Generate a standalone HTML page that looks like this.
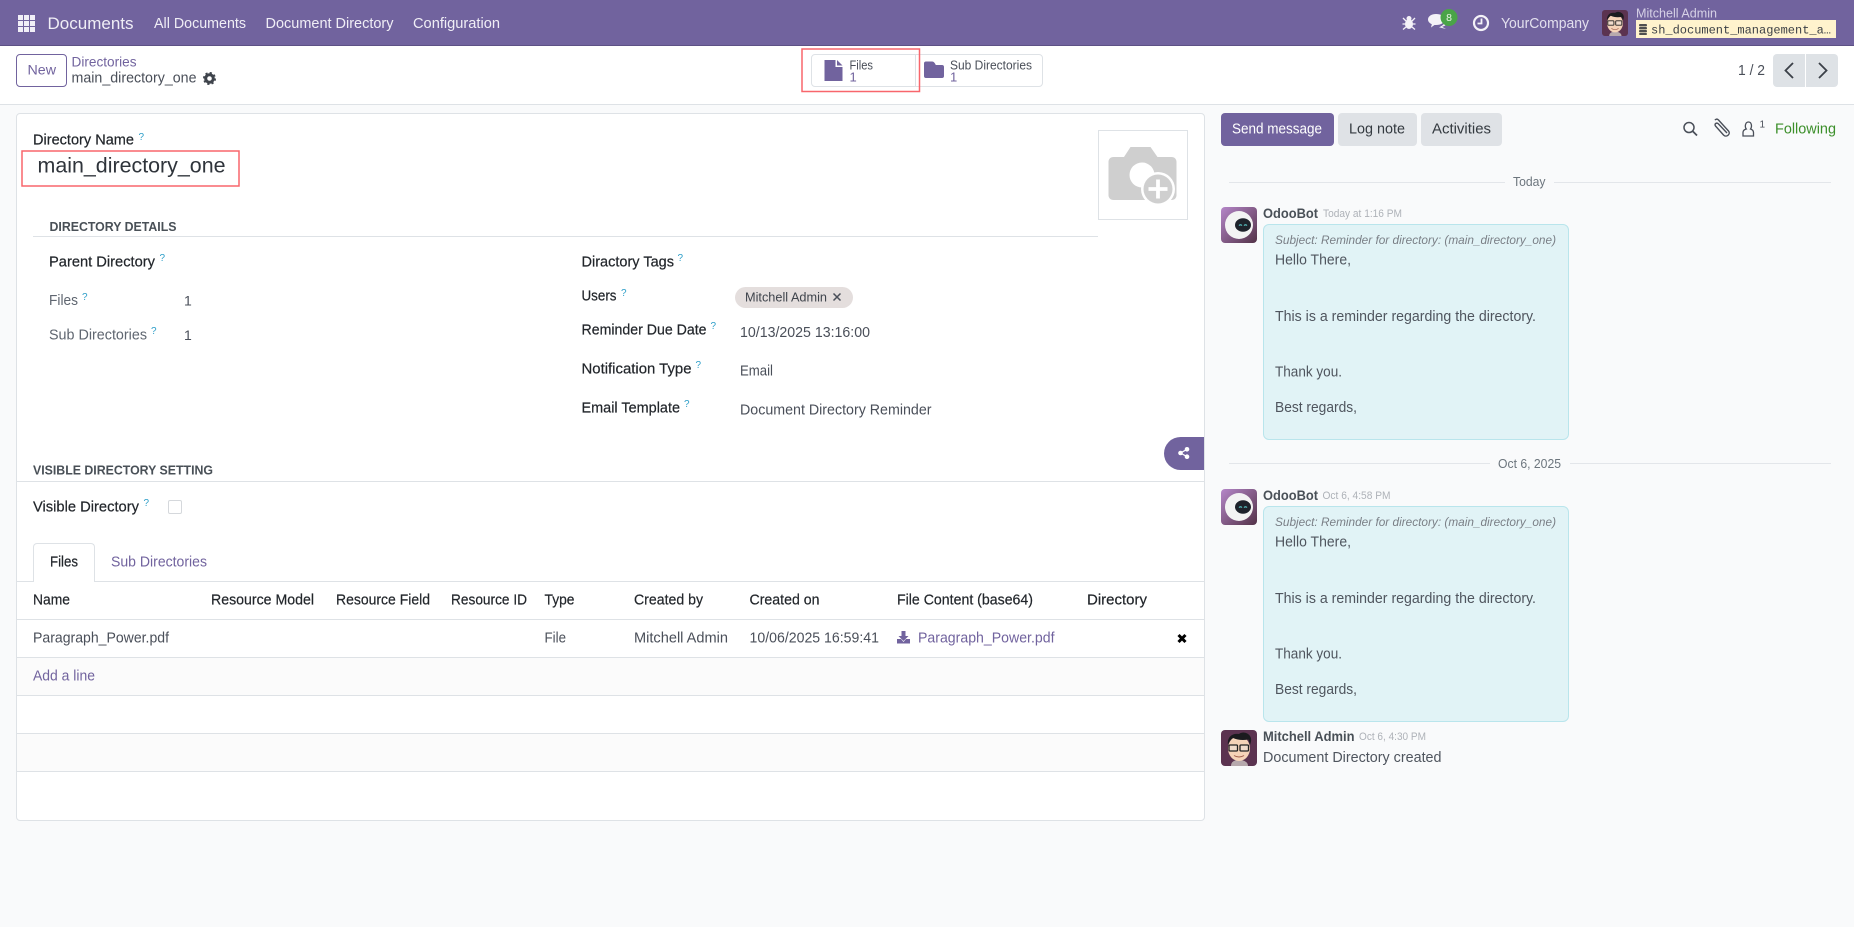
<!DOCTYPE html>
<html lang="en"><head><meta charset="utf-8"><title>Documents</title>
<style>
html,body{margin:0;padding:0;width:1854px;height:927px;overflow:hidden;background:#f9fafb}
body{position:relative;font-family:"Liberation Sans",sans-serif}
.b{position:absolute;box-sizing:border-box}
svg{position:absolute;left:0;top:0}
text{font-family:"Liberation Sans",sans-serif;font-size:14.5px;fill:#4a4f59}
.lb{fill:#22262b;stroke:#22262b;stroke-width:.2px}
.th{fill:#22262b;stroke:#22262b;stroke-width:.2px}
.mu{fill:#5f6670}
.pr{fill:#71639e}
.nv{fill:#f0eef6}
.q{font-size:10px;fill:#2f9fc9}
.sec{font-size:13px;font-weight:bold;fill:#495057}
.dt{font-size:11px;fill:#aeb2b8}
.au{font-size:13.5px;font-weight:bold;fill:#495057}
.ms{font-size:14.5px;fill:#4f555e}
</style></head><body>
<div class="b" style="left:0;top:0;width:1854px;height:46px;background:#71639e;border-bottom:1px solid #5d5185"></div>
<div class="b" style="left:0;top:46px;width:1854px;height:59px;background:#fff;border-bottom:1px solid #dee2e6"></div>
<div class="b" style="left:16px;top:54px;width:51px;height:33px;border:1px solid #71639e;border-radius:4px;background:#fff"></div>
<div class="b" style="left:811px;top:54px;width:232px;height:33px;border:1px solid #dee2e6;border-radius:4px;background:#fff"></div>
<div class="b" style="left:915px;top:54px;width:1px;height:33px;background:#dee2e6"></div>
<div class="b" style="left:1773px;top:54px;width:32px;height:33px;background:#dee2e6;border-radius:4px 0 0 4px"></div>
<div class="b" style="left:1806px;top:54px;width:32px;height:33px;background:#dee2e6;border-radius:0 4px 4px 0"></div>
<div class="b" style="left:16px;top:113px;width:1189px;height:708px;background:#fff;border:1px solid #dee2e6;border-radius:4px"></div>
<div class="b" style="left:33px;top:236px;width:1065px;height:1px;background:#dee2e6"></div>
<div class="b" style="left:1098px;top:130px;width:90px;height:90px;border:1px solid #dee2e6;background:#fff"></div>
<div class="b" style="left:17px;top:481px;width:1187px;height:1px;background:#dee2e6"></div>
<div class="b" style="left:168px;top:500px;width:14px;height:14px;border:1px solid #d5d8dc;border-radius:2px;background:#fff"></div>
<div class="b" style="left:1164px;top:437px;width:40px;height:33px;background:#71639e;border-radius:17px 0 0 17px"></div>
<div class="b" style="left:735px;top:287px;width:118px;height:21px;background:#e4dedd;border-radius:11px"></div>
<div class="b" style="left:17px;top:581px;width:1187px;height:1px;background:#dee2e6"></div>
<div class="b" style="left:33px;top:543px;width:62px;height:39px;background:#fff;border:1px solid #dee2e6;border-bottom:0;border-radius:4px 4px 0 0"></div>
<div class="b" style="left:17px;top:619px;width:1187px;height:1px;background:#dee2e6"></div>
<div class="b" style="left:17px;top:657px;width:1187px;height:39px;background:#fbfbfb;border-top:1px solid #dee2e6;border-bottom:1px solid #dee2e6"></div>
<div class="b" style="left:17px;top:733px;width:1187px;height:39px;background:#fbfbfb;border-top:1px solid #dee2e6;border-bottom:1px solid #dee2e6"></div>
<div class="b" style="left:1221px;top:113px;width:113px;height:33px;background:#71639e;border-radius:4px"></div>
<div class="b" style="left:1338px;top:113px;width:79px;height:33px;background:#dfe2e6;border-radius:4px"></div>
<div class="b" style="left:1421px;top:113px;width:81px;height:33px;background:#dfe2e6;border-radius:4px"></div>
<div class="b" style="left:1229px;top:182px;width:276px;height:1px;background:#e3e6ea"></div>
<div class="b" style="left:1554px;top:182px;width:277px;height:1px;background:#e3e6ea"></div>
<div class="b" style="left:1229px;top:463px;width:261px;height:1px;background:#e3e6ea"></div>
<div class="b" style="left:1570px;top:463px;width:261px;height:1px;background:#e3e6ea"></div>
<div class="b" style="left:1263px;top:224px;width:306px;height:216px;background:#e1f3f6;border:1px solid #b9e5ec;border-radius:6px"></div>
<div class="b" style="left:1263px;top:506px;width:306px;height:216px;background:#e1f3f6;border:1px solid #b9e5ec;border-radius:6px"></div>
<div class="b" style="left:1636px;top:20px;width:200px;height:18px;background:#fff3cd"></div>

<svg width="1854" height="927" viewBox="0 0 1854 927" xmlns="http://www.w3.org/2000/svg">
<!-- highlight boxes -->
<rect x="802" y="49" width="117.500" height="42.500" fill="none" stroke="#f8666c" stroke-width="1.500"/>
<rect x="22" y="151" width="217" height="35" fill="none" stroke="#f8666c" stroke-width="1.500"/>
<!-- apps grid -->
<g fill="#f1eff7">
<rect x="18" y="15" width="5" height="5"/><rect x="24" y="15" width="5" height="5"/><rect x="30" y="15" width="5" height="5"/>
<rect x="18" y="21" width="5" height="5"/><rect x="24" y="21" width="5" height="5"/><rect x="30" y="21" width="5" height="5"/>
<rect x="18" y="27" width="5" height="5"/><rect x="24" y="27" width="5" height="5"/><rect x="30" y="27" width="5" height="5"/>
</g>
<text class="nv" x="47.500" y="29" style="font-size:17px" textLength="86" lengthAdjust="spacingAndGlyphs">Documents</text>
<text class="nv" x="154" y="28" textLength="92" lengthAdjust="spacingAndGlyphs">All Documents</text>
<text class="nv" x="265.500" y="28" textLength="128" lengthAdjust="spacingAndGlyphs">Document Directory</text>
<text class="nv" x="413" y="28" textLength="87" lengthAdjust="spacingAndGlyphs">Configuration</text>

<!-- bug -->
<g fill="#f4f2f8" stroke="#f4f2f8">
<ellipse cx="1409" cy="24" rx="4" ry="5" stroke="none"/><circle cx="1409" cy="18.500" r="2.500" stroke="none"/>
<path d="M1403 18l3 3M1415 18l-3 3M1402.500 24h3M1415.500 24h-3M1403 29.500l3-2.500M1415 29.500l-3-2.500" fill="none" stroke-width="1.300"/>
</g>
<!-- comments -->
<path d="M1436 14c5 0 8.500 2.300 8.500 5.500s-3.500 5.500-8.500 5.500h-1.500l-3.500 2.500.8-3.300c-2.300-1-3.800-2.700-3.800-4.700 0-3.200 3.500-5.500 8-5.500z" fill="#f4f2f8"/>
<path d="M1445 22l2 .5c-.5 2.500-3 4-5 4.200l4 2.300-7-1.800c2-.5 5-2.500 6-5.200z" fill="#f4f2f8"/>
<circle cx="1449" cy="17.500" r="8.500" fill="#4aa448"/>
<text x="1449" y="21" text-anchor="middle" style="font-size:10.500px;fill:#e9f6e6">8</text>
<!-- clock -->
<circle cx="1481" cy="23" r="7" fill="none" stroke="#f4f2f8" stroke-width="2.200"/>
<path d="M1481.500 18.500v5h-4" fill="none" stroke="#f4f2f8" stroke-width="1.800"/>
<text class="nv" x="1501" y="28" textLength="88" lengthAdjust="spacingAndGlyphs" style="fill:#e3e0ee">YourCompany</text>
<!-- nav avatar -->
<g transform="translate(1602 10) scale(.722)">
<rect width="36" height="36" rx="4" fill="#5b3350"/>
<path d="M10 36c0-4 3-6 8-6s9 2 9 6z" fill="#b7a9ad"/>
<ellipse cx="18" cy="18.500" rx="11" ry="12.500" fill="#f5d3b8"/>
<path d="M7 15C6 7 11 3 18 4c4-3 9-1 11 2 2 3 1 6 0 9l-1.500-5.500c-6 1-11 .5-15.500-1.500-1.500 1-3.500 3-5 7z" fill="#1b1b1f"/>
<g fill="#e9e9e9" fill-opacity=".4" stroke="#222" stroke-width="1.300"><rect x="8" y="15" width="8.500" height="6" rx="1"/><rect x="19" y="15" width="8.500" height="6" rx="1"/></g>
<path d="M13 25.500c3 2 7 2 10 0" fill="none" stroke="#a2604c" stroke-width="1"/>
</g>
<text x="1636" y="17.500" textLength="81" lengthAdjust="spacingAndGlyphs" style="font-size:13px;fill:#d6d1e6">Mitchell Admin</text>
<g fill="#4f4f4f"><rect x="1639" y="24" width="8" height="2.400" rx="1"/><rect x="1639" y="27" width="8" height="2.400" rx="1"/><rect x="1639" y="30" width="8" height="2.400" rx="1"/><rect x="1639" y="33" width="8" height="2" rx="1"/></g>
<text x="1651" y="33.300" textLength="180" lengthAdjust="spacing" style="font-family:'Liberation Mono',monospace;font-size:12px;fill:#3b3f44">sh_document_management_a…</text>

<!-- control panel -->
<text class="pr" x="27.500" y="74.500" textLength="28.500" lengthAdjust="spacingAndGlyphs" style="font-size:14px">New</text>
<text class="pr" x="71.500" y="66.500" textLength="65" lengthAdjust="spacingAndGlyphs" style="font-size:13.500px">Directories</text>
<text x="71.500" y="82.500" textLength="125" lengthAdjust="spacingAndGlyphs" style="font-size:14.500px">main_directory_one</text>
<g><circle cx="209.500" cy="78.500" r="3.800" fill="none" stroke="#3f444c" stroke-width="3"/>
<circle cx="209.500" cy="78.500" r="5.600" fill="none" stroke="#3f444c" stroke-width="1.800" stroke-dasharray="2.200 2.200"/></g>
<!-- file icon -->
<path d="M824.500 60h11v7h7v14h-18z" fill="#71639e"/><path d="M837 60l5.500 5.500H837z" fill="#71639e"/>
<text x="849.500" y="69.500" textLength="23.500" lengthAdjust="spacingAndGlyphs" style="font-size:12.500px">Files</text>
<text class="pr" x="849.500" y="81.500" style="font-size:13px">1</text>
<path d="M926 61.500h6c1.500 0 2 .6 3 2l.8 1.500h6.200c1.300 0 2 .8 2 2v9c0 1.200-.7 2-2 2h-16c-1.300 0-2-.8-2-2V63.500c0-1.200.7-2 2-2z" fill="#71639e"/>
<text x="950" y="69.500" textLength="82" lengthAdjust="spacingAndGlyphs" style="font-size:12.500px">Sub Directories</text>
<text class="pr" x="950" y="81.500" style="font-size:13px">1</text>
<!-- pager -->
<text x="1738" y="75" textLength="27" lengthAdjust="spacingAndGlyphs">1 / 2</text>
<path d="M1793 63l-7.500 7.500 7.500 7.500" fill="none" stroke="#3b4048" stroke-width="1.800"/>
<path d="M1819 63l7.500 7.500-7.500 7.500" fill="none" stroke="#3b4048" stroke-width="1.800"/>

<!-- form -->
<text class="lb" x="33" y="144.500" textLength="101" lengthAdjust="spacingAndGlyphs">Directory Name</text>
<text class="q" x="138.500" y="140">?</text>
<text x="37.500" y="172.500" textLength="188" lengthAdjust="spacingAndGlyphs" style="font-size:21px;fill:#2f343b">main_directory_one</text>
<text class="sec" x="49.500" y="231" textLength="127" lengthAdjust="spacingAndGlyphs">DIRECTORY DETAILS</text>
<!-- camera placeholder -->
<path d="M1113 157h11l6.500-10h20l7 10h14c3 0 5 2 5 5v33c0 3-2 5-5 5h-58c-3 0-5-2-5-5v-33c0-3 2-5 5-5z" fill="#cfcfcf"/>
<circle cx="1142" cy="175" r="12.500" fill="#fff"/>
<circle cx="1158" cy="189" r="17" fill="#fff"/>
<circle cx="1158" cy="189" r="14.500" fill="#cfcfcf"/>
<path d="M1158 179.500v19M1148.500 189h19" stroke="#fff" stroke-width="3.800"/>

<text class="lb" x="49" y="266.500" textLength="106" lengthAdjust="spacingAndGlyphs">Parent Directory</text>
<text class="q" x="159.500" y="261">?</text>
<text class="mu" x="49" y="305" textLength="29" lengthAdjust="spacingAndGlyphs">Files</text>
<text class="q" x="82" y="300">?</text>
<text x="184" y="305.500" style="font-size:14px">1</text>
<text class="mu" x="49" y="339.500" textLength="98" lengthAdjust="spacingAndGlyphs">Sub Directories</text>
<text class="q" x="151" y="334">?</text>
<text x="184" y="340" style="font-size:14px">1</text>

<text class="lb" x="581.500" y="266.500" textLength="92.500" lengthAdjust="spacingAndGlyphs">Diractory Tags</text>
<text class="q" x="677.500" y="261">?</text>
<text class="lb" x="581.500" y="300.500" textLength="35" lengthAdjust="spacingAndGlyphs">Users</text>
<text class="q" x="621" y="296">?</text>
<text class="lb" x="581.500" y="334.500" textLength="125" lengthAdjust="spacingAndGlyphs">Reminder Due Date</text>
<text class="q" x="710.500" y="329">?</text>
<text class="lb" x="581.500" y="373.500" textLength="110" lengthAdjust="spacingAndGlyphs">Notification Type</text>
<text class="q" x="695.500" y="368">?</text>
<text class="lb" x="581.500" y="412.500" textLength="98.500" lengthAdjust="spacingAndGlyphs">Email Template</text>
<text class="q" x="684" y="407">?</text>
<text x="745" y="301.500" textLength="82" lengthAdjust="spacingAndGlyphs" style="font-size:12.500px;fill:#3f444c">Mitchell Admin</text>
<path d="M833.500 293.500l7 7M840.500 293.500l-7 7" stroke="#4a4f59" stroke-width="1.500"/>
<text x="740" y="337" textLength="130" lengthAdjust="spacingAndGlyphs">10/13/2025 13:16:00</text>
<text x="740" y="375.500" textLength="33" lengthAdjust="spacingAndGlyphs">Email</text>
<text x="740" y="414.500" textLength="191.500" lengthAdjust="spacingAndGlyphs">Document Directory Reminder</text>

<text class="sec" x="33" y="474.500" textLength="180" lengthAdjust="spacingAndGlyphs">VISIBLE DIRECTORY SETTING</text>
<text class="lb" x="33" y="511.500" textLength="106" lengthAdjust="spacingAndGlyphs">Visible Directory</text>
<text class="q" x="143.500" y="506">?</text>
<!-- share -->
<g fill="#fff"><circle cx="1180.500" cy="453" r="2.300"/><circle cx="1187" cy="449.300" r="2.300"/><circle cx="1187" cy="456.700" r="2.300"/></g>
<path d="M1180.500 453l6.500-3.700M1180.500 453l6.500 3.700" stroke="#fff" stroke-width="1.200"/>

<!-- tabs/table -->
<text class="lb" x="50" y="566.500" textLength="28" lengthAdjust="spacingAndGlyphs">Files</text>
<text class="pr" x="111" y="566.500" textLength="96" lengthAdjust="spacingAndGlyphs">Sub Directories</text>
<g>
<text class="th" x="33" y="604.500" textLength="37" lengthAdjust="spacingAndGlyphs">Name</text>
<text class="th" x="211" y="604.500" textLength="103" lengthAdjust="spacingAndGlyphs">Resource Model</text>
<text class="th" x="336" y="604.500" textLength="94" lengthAdjust="spacingAndGlyphs">Resource Field</text>
<text class="th" x="451" y="604.500" textLength="76" lengthAdjust="spacingAndGlyphs">Resource ID</text>
<text class="th" x="544.500" y="604.500" textLength="30" lengthAdjust="spacingAndGlyphs">Type</text>
<text class="th" x="634" y="604.500" textLength="69" lengthAdjust="spacingAndGlyphs">Created by</text>
<text class="th" x="749.500" y="604.500" textLength="70" lengthAdjust="spacingAndGlyphs">Created on</text>
<text class="th" x="897" y="604.500" textLength="136" lengthAdjust="spacingAndGlyphs">File Content (base64)</text>
<text class="th" x="1087" y="604.500" textLength="60" lengthAdjust="spacingAndGlyphs">Directory</text>
</g>
<text x="33" y="642.500" textLength="136" lengthAdjust="spacingAndGlyphs">Paragraph_Power.pdf</text>
<text x="544.500" y="642.500" textLength="21.500" lengthAdjust="spacingAndGlyphs">File</text>
<text x="634" y="642.500" textLength="94" lengthAdjust="spacingAndGlyphs">Mitchell Admin</text>
<text x="749.500" y="642.500" textLength="129.500" lengthAdjust="spacingAndGlyphs">10/06/2025 16:59:41</text>
<path d="M901.500 631h4v5h3l-5 5-5-5h3z" fill="#71639e"/><path d="M897 639h4l2.500 3 2.500-3h4v4.500h-13z" fill="#71639e"/>
<text class="pr" x="918" y="642.500" textLength="136.500" lengthAdjust="spacingAndGlyphs">Paragraph_Power.pdf</text>
<path d="M1178.500 635l7 7M1185.500 635l-7 7" stroke="#000" stroke-width="3"/>
<text class="pr" x="33" y="680.500" textLength="62" lengthAdjust="spacingAndGlyphs">Add a line</text>

<!-- chatter -->
<text x="1232" y="133.500" textLength="90" lengthAdjust="spacingAndGlyphs" style="fill:#fff">Send message</text>
<text x="1349" y="133.500" textLength="56" lengthAdjust="spacingAndGlyphs" style="fill:#343a40">Log note</text>
<text x="1432" y="133.500" textLength="59" lengthAdjust="spacingAndGlyphs" style="fill:#343a40">Activities</text>
<circle cx="1689" cy="127.500" r="5" fill="none" stroke="#4a4f59" stroke-width="1.500"/><path d="M1692.500 131l4.500 4.500" stroke="#4a4f59" stroke-width="1.800"/>
<path d="M1728 134l-8.500-9c-2-2-4.500 0-3 2l8 9c3 3 7.500-1 5-4l-10-11c-1.500-1.500-3-.8-3.500.2" fill="none" stroke="#4a4f59" stroke-width="1.400" transform="translate(-1 -1)"/>
<path d="M1743 135h10.500v-3.500c0-2-1.500-3-3-3.500 1.500-2 1.500-7-2-7-3.500 0-3.800 5-2.200 7-1.800.5-3.300 1.500-3.300 3.500z" fill="none" stroke="#4a4f59" stroke-width="1.300" transform="translate(0 1)"/>
<text x="1759.500" y="127.500" style="font-size:10px">1</text>
<text x="1775" y="133.500" textLength="61" lengthAdjust="spacingAndGlyphs" style="fill:#3c8f2a">Following</text>

<text x="1513" y="186" textLength="32.500" lengthAdjust="spacingAndGlyphs" style="font-size:12.500px;fill:#6c757d">Today</text>
<text x="1498" y="468" textLength="63" lengthAdjust="spacingAndGlyphs" style="font-size:12.500px;fill:#6c757d">Oct 6, 2025</text>

<!-- Message 1 -->
<defs><linearGradient id="bg" x1="0" y1="0" x2="1" y2="1"><stop offset="0" stop-color="#b586c9"/><stop offset="1" stop-color="#533248"/></linearGradient></defs>
<g transform="translate(1221 207)">
<rect width="36" height="36" rx="4" fill="url(#bg)"/><circle cx="18" cy="18" r="14" fill="#f3f3f3"/><ellipse cx="22" cy="18" rx="8" ry="6.800" fill="#1e222b"/>
<path d="M18 18.500a2 2 0 0 1 3 0M23 18.500a2 2 0 0 1 3 0" stroke="#5fd3d3" stroke-width="1.100" fill="none"/></g>
<text class="au" x="1263" y="218" textLength="55" lengthAdjust="spacingAndGlyphs">OdooBot</text>
<text class="dt" x="1323" y="217" textLength="79" lengthAdjust="spacingAndGlyphs">Today at 1:16 PM</text>
<text x="1275" y="244" textLength="281" lengthAdjust="spacingAndGlyphs" style="font-size:12px;font-style:italic;fill:#7a7f86">Subject: Reminder for directory: (main_directory_one)</text>
<text class="ms" x="1275" y="264.500" textLength="76" lengthAdjust="spacingAndGlyphs">Hello There,</text>
<text class="ms" x="1275" y="321" textLength="261" lengthAdjust="spacingAndGlyphs">This is a reminder regarding the directory.</text>
<text class="ms" x="1275" y="376.500" textLength="67" lengthAdjust="spacingAndGlyphs">Thank you.</text>
<text class="ms" x="1275" y="412" textLength="82" lengthAdjust="spacingAndGlyphs">Best regards,</text>

<!-- Message 2 -->
<g transform="translate(1221 489)">
<rect width="36" height="36" rx="4" fill="url(#bg)"/><circle cx="18" cy="18" r="14" fill="#f3f3f3"/><ellipse cx="22" cy="18" rx="8" ry="6.800" fill="#1e222b"/>
<path d="M18 18.500a2 2 0 0 1 3 0M23 18.500a2 2 0 0 1 3 0" stroke="#5fd3d3" stroke-width="1.100" fill="none"/></g>
<text class="au" x="1263" y="500" textLength="55" lengthAdjust="spacingAndGlyphs">OdooBot</text>
<text class="dt" x="1322.500" y="499" textLength="68" lengthAdjust="spacingAndGlyphs">Oct 6, 4:58 PM</text>
<text x="1275" y="526" textLength="281" lengthAdjust="spacingAndGlyphs" style="font-size:12px;font-style:italic;fill:#7a7f86">Subject: Reminder for directory: (main_directory_one)</text>
<text class="ms" x="1275" y="546.500" textLength="76" lengthAdjust="spacingAndGlyphs">Hello There,</text>
<text class="ms" x="1275" y="603" textLength="261" lengthAdjust="spacingAndGlyphs">This is a reminder regarding the directory.</text>
<text class="ms" x="1275" y="658.500" textLength="67" lengthAdjust="spacingAndGlyphs">Thank you.</text>
<text class="ms" x="1275" y="694" textLength="82" lengthAdjust="spacingAndGlyphs">Best regards,</text>

<!-- Message 3 -->
<g transform="translate(1221 730)">
<rect width="36" height="36" rx="4" fill="#5b3350"/>
<path d="M10 36c0-4 3-6 8-6s9 2 9 6z" fill="#b7a9ad"/>
<ellipse cx="18" cy="18.500" rx="11" ry="12.500" fill="#f5d3b8"/>
<path d="M7 15C6 7 11 3 18 4c4-3 9-1 11 2 2 3 1 6 0 9l-1.500-5.500c-6 1-11 .5-15.500-1.500-1.500 1-3.500 3-5 7z" fill="#1b1b1f"/>
<g fill="#e9e9e9" fill-opacity=".4" stroke="#222" stroke-width="1.300"><rect x="8" y="15" width="8.500" height="6" rx="1"/><rect x="19" y="15" width="8.500" height="6" rx="1"/></g>
<path d="M13 25.500c3 2 7 2 10 0" fill="none" stroke="#a2604c" stroke-width="1"/>
</g>
<text class="au" x="1263" y="741" textLength="91.500" lengthAdjust="spacingAndGlyphs">Mitchell Admin</text>
<text class="dt" x="1359" y="740" textLength="67" lengthAdjust="spacingAndGlyphs">Oct 6, 4:30 PM</text>
<text class="ms" x="1263" y="762" textLength="178.500" lengthAdjust="spacingAndGlyphs">Document Directory created</text>
</svg>
</body></html>
